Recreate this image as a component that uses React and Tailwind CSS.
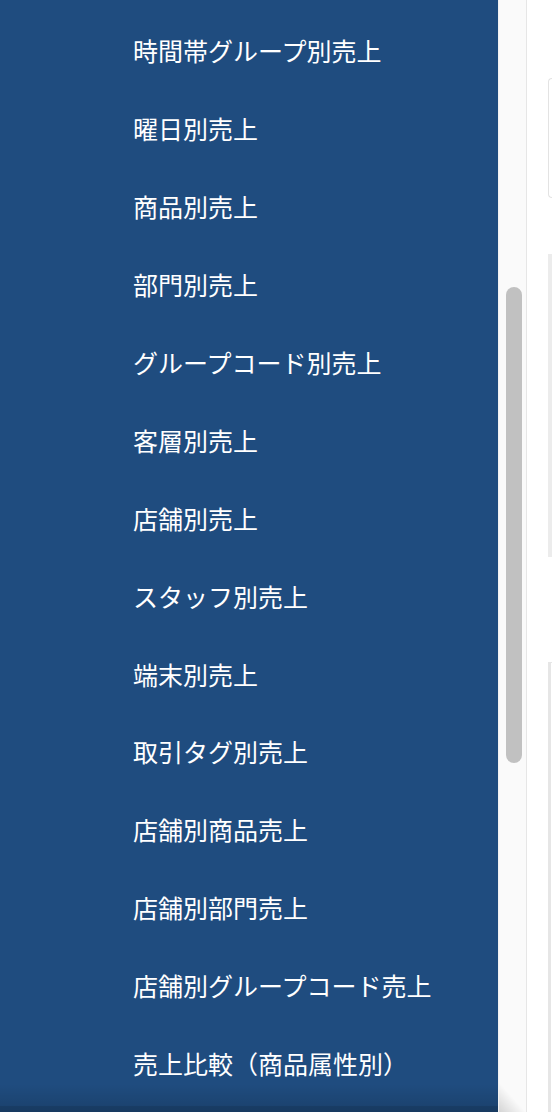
const menuItems = [
  "時間帯グループ別売上",
  "曜日別売上",
  "商品別売上",
  "部門別売上",
  "グループコード別売上",
  "客層別売上",
  "店舗別売上",
  "スタッフ別売上",
  "端末別売上",
  "取引タグ別売上",
  "店舗別商品売上",
  "店舗別部門売上",
  "店舗別グループコード売上",
  "売上比較（商品属性別）",
];

const App = () => {
  return (
    <div
      className="flex h-[1112px] w-[552px] overflow-hidden bg-white"
      style={{ fontFamily: '"Noto Sans CJK JP", "Noto Sans", sans-serif' }}
    >
      <nav className="relative w-[498px] shrink-0 bg-[#1f4c7f] pl-[133px] pt-[12px]">
        <ul>
          {menuItems.map((item) => (
            <li
              key={item}
              className="flex h-[77.9px] items-center text-[25px] leading-none text-white"
            >
              {item}
            </li>
          ))}
        </ul>
        <div className="pointer-events-none absolute inset-x-0 bottom-0 h-[28px] bg-gradient-to-b from-transparent to-black/15" />
        <div className="pointer-events-none absolute inset-x-0 bottom-0 h-[6px] bg-black/10" />
      </nav>

      <div className="relative w-[29px] shrink-0 border-l border-r border-l-[#f2f2f2] border-r-[#e6e6e6] bg-[#fafafa]">
        <div className="ml-[7px] mt-[287px] h-[476px] w-[16px] rounded-full bg-[#c1c1c1]" />
        <div className="pointer-events-none absolute bottom-0 left-0 h-[30px] w-full bg-gradient-to-tr from-black/15 via-transparent to-transparent" />
      </div>

      <main className="flex-1 pl-[21px]">
        <div className="mt-[78px] h-[120px] rounded-l-[5px] border border-r-0 border-[#e3e3e3] bg-white" />
        <div className="mt-[56px] h-[303px] border-l-[4px] border-y border-[#ececec] bg-white" />
        <div className="mt-[105px] h-[460px] border-l-[3px] border-t border-[#e6e6e6] bg-white" />
      </main>
    </div>
  );
};

export default App;
